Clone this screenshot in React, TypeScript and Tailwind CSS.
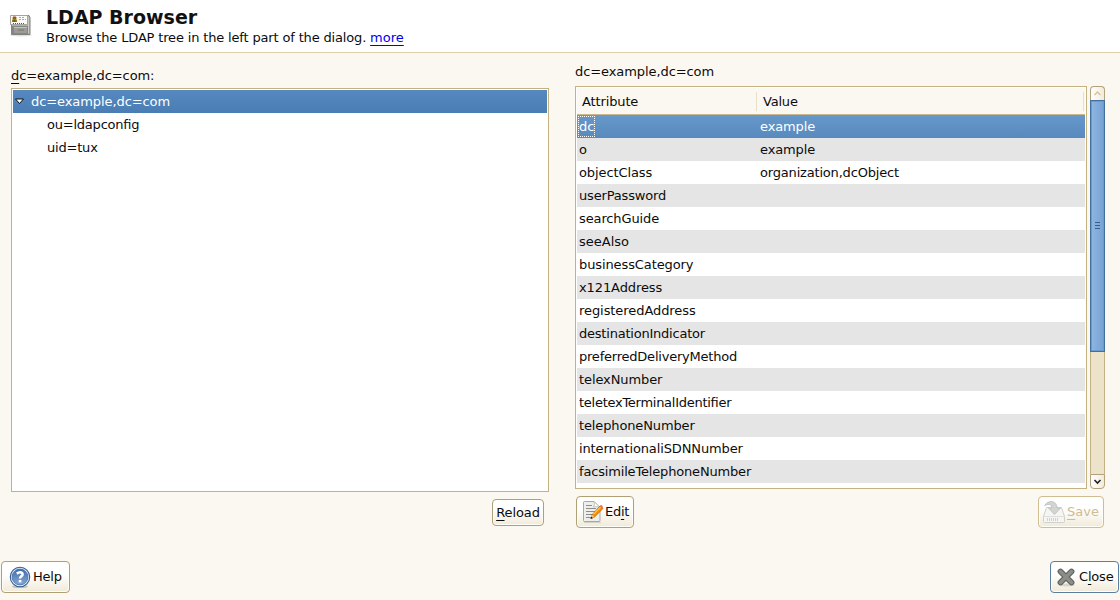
import type { ReactNode } from "react";

const attributes: [string, string, string, string][] = [
  ["dc", "example", "", "tracking-[-0.12px]"],
  ["o", "example", "", "tracking-[-0.12px]"],
  ["objectClass", "organization,dcObject", "tracking-[-0.1px]", "tracking-[-0.18px]"],
  ["userPassword", "", "tracking-[-0.16px]", ""],
  ["searchGuide", "", "tracking-[-0.12px]", ""],
  ["seeAlso", "", "", ""],
  ["businessCategory", "", "tracking-[-0.1px]", ""],
  ["x121Address", "", "tracking-[-0.1px]", ""],
  ["registeredAddress", "", "tracking-[-0.07px]", ""],
  ["destinationIndicator", "", "tracking-[-0.22px]", ""],
  ["preferredDeliveryMethod", "", "tracking-[-0.22px]", ""],
  ["telexNumber", "", "tracking-[-0.1px]", ""],
  ["teletexTerminalIdentifier", "", "tracking-[-0.27px]", ""],
  ["telephoneNumber", "", "tracking-[-0.13px]", ""],
  ["internationaliSDNNumber", "", "tracking-[-0.12px]", ""],
  ["facsimileTelephoneNumber", "", "tracking-[-0.17px]", ""],
];

function Key({ children }: { children: ReactNode }) {
  return <span className="underline decoration-1 underline-offset-[3px]">{children}</span>;
}

function LdapIcon() {
  return (
    <svg width="24" height="26" viewBox="0 0 24 26" className="shrink-0">
      <ellipse cx="12" cy="23" rx="11" ry="1.5" fill="#000" opacity=".12" />
      <path d="M2.500 3.500h17.500l1 2v17h-18.500z" fill="#b0b0ac" stroke="#82827e" />
      <path d="M19.500 5v16" stroke="#cacac6" />
      <path d="M3 14h16v8H3z" fill="#868682" />
      <path d="M5 15.500h13v5.500H5z" fill="#9b9b97" />
      <path d="M5 15.500h13" stroke="#c2c2be" />
      <path d="M9 17.500h6v1H9z" fill="#757571" />
      <path d="M1.500 3.500h17v9h-17z" fill="#fafaf8" stroke="#a5a5a0" />
      <path d="M3 5h5v5H3z" fill="#d8bf8a" />
      <path d="M4 4.500h3v3H4z" fill="#9b5a12" />
      <path d="M3 8h5v2H3z" fill="#b5711a" />
      <path d="M4.500 7.500h2v2.500h-2z" fill="#3e7413" />
      <path d="M10 5.500h6M10 7.500h7" stroke="#aaa" strokeDasharray="2 1" />
      <path d="M4 11.500h12" stroke="#55555a" strokeDasharray="1 1" />
    </svg>
  );
}

function EditIcon() {
  return (
    <svg width="22" height="24" viewBox="0 0 22 24" className="shrink-0">
      <path d="M2 22.500h17" stroke="#000" opacity=".12" />
      <path d="M1.500 2.500q0-1 1-1h9.500l6 6v13q0 1-1 1H2.500q-1 0-1-1z" fill="#eeeeec" stroke="#a6a8a3" />
      <path d="M12 1.500q1 3.500-.5 5.500 3-1 6.500.5z" fill="#fff" stroke="#b5b5b0" strokeWidth=".8" />
      <path d="M4 5.500h6M4 8.500h10M4 11.500h10M4 14.500h7M4 17.500h5" stroke="#8b8d88" />
      <path d="M18.200 5.800l2.800 2.700-8.700 8.700-3 1.300.8-3.800z" fill="#f58a0b" stroke="#b35b05" strokeWidth=".7" />
      <path d="M11.500 14.300l7-7" stroke="#ffc43a" strokeWidth="1.300" />
      <path d="M18 6l1-1q2 .3 2 2.400l-.7.700z" fill="#ee7468" />
      <path d="M10 14.800l2.200 2.200-3.200 1.500z" fill="#ecd0a0" />
      <path d="M9.400 16.700l1.500 1.200-2.600 1.100z" fill="#111" />
    </svg>
  );
}

function SaveIcon() {
  return (
    <svg width="24" height="24" viewBox="0 0 24 24" className="shrink-0">
      <path d="M4.500 7.500h15l3 9v5q0 1-1 1h-19q-1 0-1-1v-5z" fill="#f5f5f3" stroke="#d0d0cc" />
      <path d="M2 16.500h20" stroke="#dededb" />
      <path d="M5 19.500h11" stroke="#d0d0cd" strokeWidth="3" strokeDasharray="1 1" />
      <path d="M2.500 5.500Q5 1.500 9 1.500q6 .5 6 6.500h3.500l-6 6.500-6-6.500H10q0-3.500-2.500-3.500-2.500-.2-5 1z" fill="#d3d5d3" stroke="#bfc1bf" strokeWidth=".9" />
    </svg>
  );
}

function HelpIcon() {
  return (
    <svg width="22" height="24" viewBox="0 0 22 24" className="shrink-0">
      <defs>
        <linearGradient id="help" x2="0" y2="1">
          <stop stopColor="#416da9" />
          <stop offset="1" stopColor="#83a9d7" />
        </linearGradient>
      </defs>
      <ellipse cx="11" cy="21.500" rx="8" ry="1.600" opacity=".2" />
      <circle cx="11" cy="12" r="9.700" fill="#e8eff7" stroke="#315c98" strokeWidth="1.100" />
      <circle cx="11" cy="12" r="7.900" fill="url(#help)" stroke="#416da5" strokeWidth=".8" />
      <path d="M7.800 8.600Q11 6.200 13.100 8c1.300 1.700-.1 2.900-1.300 3.700Q11 12.300 11 13.500" fill="none" stroke="#fff" strokeWidth="2.600" />
      <path d="M9.700 14.900h2.700v2.500H9.700z" fill="#fff" />
    </svg>
  );
}

function CloseIcon() {
  return (
    <svg width="20" height="20" viewBox="0 0 20 20" className="shrink-0">
      <ellipse cx="11" cy="18" rx="8" ry="1.500" opacity=".12" />
      <path d="M4.500 4.500l11 11m0-11l-11 11" stroke="#5c5e5a" strokeWidth="5.800" strokeLinecap="round" />
      <path d="M4.500 4.500l11 11m0-11l-11 11" stroke="#8b8d88" strokeWidth="3.800" strokeLinecap="round" />
    </svg>
  );
}

const button =
  "flex shrink-0 items-center whitespace-nowrap rounded-[4px] border bg-linear-to-b from-white from-40% to-[#f1ead8] shadow-[inset_0_0_0_1px_#fffdf8]";

export default function App() {
  return (
    <div className="flex h-[600px] w-[1120px] flex-col overflow-hidden bg-[#fbf8f1] font-['DejaVu_Sans',sans-serif] text-[13px] leading-[23px] text-[#0c0c0c] [font-feature-settings:'liga']">
      <header className="flex h-[53px] shrink-0 border-b border-[#dfd0aa] bg-white pl-[9px] pt-[12px]">
        <LdapIcon />
        <div className="-mt-[5px] ml-[13px]">
          <h1 className="text-[19px] font-bold leading-[21px] text-[#111]">LDAP Browser</h1>
          <p className="leading-[19px]">
            <span className="tracking-[-0.16px]">Browse the LDAP tree in the left part of the dialog. </span>
            <a className="text-[#0000ee] underline decoration-1 underline-offset-[3px]">more</a>
          </p>
        </div>
      </header>

      <main className="flex h-[508px] shrink-0 pl-[11px]">
        <section className="flex w-[538px] shrink-0 flex-col">
          <div className="mt-[11px] h-[24px] tracking-[-0.08px]">
            <Key>d</Key>c=example,dc=com:
          </div>
          <div className="h-[404px] border border-[#c4b283] bg-white p-px">
            <div className="flex h-[23px] items-center bg-linear-to-b from-[#5689bf] to-[#4a7db3] text-white">
              <svg width="11" height="7" viewBox="0 0 11 7" className="ml-px">
                <path d="M1.500 1h8l-4 4.500z" fill="#fff" stroke="#111" />
              </svg>
              <span className="ml-[6px] tracking-[-0.08px]">dc=example,dc=com</span>
            </div>
            <div className="pl-[34px] tracking-[-0.22px]">ou=ldapconfig</div>
            <div className="pl-[34px] tracking-[-0.2px]">uid=tux</div>
          </div>
          <div className="mt-[7px] flex justify-end pr-[5px]">
            <button className={`${button} h-[27px] w-[52px] justify-center border-[#b0a078]`}>
              <span className="tracking-[-0.1px]"><Key>R</Key>eload</span>
            </button>
          </div>
        </section>

        <section className="ml-[26px] flex w-[530px] shrink-0 flex-col">
          <div className="mt-[7px] h-[26px] tracking-[-0.08px]">dc=example,dc=com</div>
          <div className="flex h-[403px] gap-[3px]">
            <div className="w-[512px] border border-[#c4b283] bg-white p-px">
              <div className="flex h-[27px] items-end border-b border-[#c9b890] bg-[#fbf8f1] pb-[3px]">
                <div className="flex h-[19px] w-[180px] items-center border-r border-[#eadfc4] pl-[5px] tracking-[-0.13px]">Attribute</div>
                <div className="flex h-[19px] w-[327px] items-center border-r border-[#eadfc4] pl-[6px] tracking-[-0.2px]">Value</div>
              </div>
              {attributes.map(([name, value, nameTracking, valueTracking], i) => (
                <div
                  key={name}
                  className={`flex h-[23px] ${
                    i === 0
                      ? "bg-linear-to-b from-[#6698ca] to-[#588abf] text-white"
                      : i % 2
                        ? "bg-[#e5e5e5]"
                        : "bg-white"
                  }`}
                >
                  <div className={`w-[183px] pl-[2px] ${nameTracking}`}>
                    {i === 0 ? (
                      <span className="-ml-px mt-px block h-[21px] w-[17px] border border-dotted border-white leading-[19px]">{name}</span>
                    ) : (
                      name
                    )}
                  </div>
                  <div className={valueTracking}>{value}</div>
                </div>
              ))}
            </div>
            <div className="flex w-[15px] flex-col">
              <div className="flex h-[14px] items-center justify-center rounded-t-[4px] border border-b-0 border-[#b3a17a] bg-linear-to-r from-white to-[#f2ebda]">
                <svg width="9" height="7" viewBox="0 0 9 7"><path d="M1.500 5l3-3 3 3" fill="none" stroke="#d8c49c" strokeWidth="1.500" /></svg>
              </div>
              <div className="flex h-[252px] flex-col items-center justify-center gap-[2px] border border-[#436f9f] bg-linear-to-r from-[#8eb6e2] to-[#76a2d3] pb-px shadow-[inset_0_0_0_1px_#6c9bd0]">
                <i className="h-px w-[5px] bg-[#365f8e]" />
                <i className="h-px w-[5px] bg-[#365f8e]" />
                <i className="h-px w-[5px] bg-[#365f8e]" />
              </div>
              <div className="h-[122px] border-x border-[#c4b283] bg-[#ede2ca]" />
              <div className="flex h-[15px] items-center justify-center rounded-b-[4px] border border-[#b3a17a] bg-linear-to-r from-white to-[#f2ebda]">
                <svg width="9" height="7" viewBox="0 0 9 7"><path d="M1.500 2l3 3 3-3" fill="none" stroke="#222" strokeWidth="1.600" /></svg>
              </div>
            </div>
          </div>
          <div className="mt-[7px] flex justify-between pl-px pr-px">
            <button className={`${button} h-[32px] w-[58px] border-[#b0a078] pl-[5px]`}>
              <EditIcon />
              <span className="ml-px pb-[2px] tracking-[-0.3px]">Ed<Key>i</Key>t</span>
            </button>
            <button className={`${button} h-[32px] w-[66px] border-[#d0bd90] pl-[3px] text-[#cfbc92]`}>
              <SaveIcon />
              <span className="ml-px pb-[2px]"><Key>S</Key>ave</span>
            </button>
          </div>
        </section>
      </main>

      <footer className="flex justify-between pl-px pr-px">
        <button className={`${button} h-[32px] w-[69px] border-[#b0a078] pl-[7px]`}>
          <HelpIcon />
          <span className="ml-[2px] pb-[2px] tracking-[-0.25px]">Help</span>
        </button>
        <button className={`${button} h-[32px] w-[69px] border-[#5b7e9f] pl-[5px]`}>
          <CloseIcon />
          <span className="ml-[3px] pb-[2px] tracking-[-0.2px]">C<Key>l</Key>ose</span>
        </button>
      </footer>
    </div>
  );
}
